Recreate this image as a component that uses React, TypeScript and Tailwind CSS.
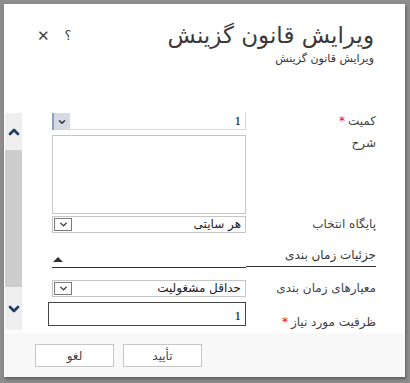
import { ChevronUp, ChevronDown } from 'lucide-react'

function SelectBox({ value }: { value: string }) {
  return (
    <div className="flex h-[17px] w-[194px] items-stretch border border-[#c6c6c6] bg-white">
      <div className="m-[1px] flex w-[18px] items-center justify-center border border-[#7a7a7a] bg-white">
        <ChevronDown size={11} strokeWidth={3} className="text-[#333]" />
      </div>
      <div dir="rtl" className="flex-1 pr-[4px] text-[12px] leading-[15px] text-[#222]">
        {value}
      </div>
    </div>
  )
}

function FormRow({ label, required, children, className, labelClass }: { label: string; required?: boolean; children: React.ReactNode; className?: string; labelClass?: string }) {
  return (
    <div dir="rtl" className={`flex items-start ${className ?? ''}`}>
      <div className={`w-[130px] shrink-0 text-[12px] leading-[16px] text-[#444] ${labelClass ?? ''}`}>
        {label}
        {required && <span className="mr-[3px] text-[#e00]">*</span>}
      </div>
      <div dir="ltr" className="flex w-[194px] justify-start">
        {children}
      </div>
    </div>
  )
}

export default function App() {
  return (
    <div className="h-[383px] w-[410px] overflow-hidden bg-[#8d8d8d] pl-[4px] pt-[4px] font-['DejaVu_Sans',sans-serif]">
      <div className="flex h-[373px] w-[401px] flex-col bg-white shadow-[1px_2px_3px_rgba(0,0,0,0.35)]">
        {/* header */}
        <div className="flex h-[109px] shrink-0 items-start pr-[31px] pt-[16px]">
          <div className="flex items-center gap-[15px] pl-[33px] pt-[7px] text-[#444]">
            <span className="text-[15px] leading-[18px]">✕</span>
            <span className="text-[13px] leading-[18px]">؟</span>
          </div>
          <div dir="rtl" className="ml-auto flex flex-col items-start">
            <div className="text-[23px] leading-[30px] text-[#3a3a3a]">ویرایش قانون گزینش</div>
            <div className="mt-[2px] text-[11px] leading-[14px] text-[#333]">ویرایش قانون گزینش</div>
          </div>
        </div>

        {/* body */}
        <div className="flex h-[217px] shrink-0 overflow-hidden">
          <div className="ml-[1px] flex w-[17px] shrink-0 flex-col">
            <div className="flex h-[37px] items-center justify-center bg-[#efefef]">
              <ChevronUp size={16} strokeWidth={4} className="text-[#1f3d63]" />
            </div>
            <div className="h-[137px] bg-[#cdcdcd]" />
            <div className="flex h-[43px] items-center justify-center bg-[#efefef]">
              <ChevronDown size={16} strokeWidth={4} className="text-[#1f3d63]" />
            </div>
          </div>
          <div className="flex flex-1 flex-col pl-[30px] pr-[30px]">
            <FormRow label="کمیت" required className="h-[24px]">
              <div className="flex h-[17px] w-[194px] items-stretch">
                <div className="flex w-[18px] items-center justify-center border-l-2 border-[#8fa0c0] bg-[#d5d9e3]">
                  <ChevronDown size={10} strokeWidth={3.5} className="text-[#333]" />
                </div>
                <div className="flex flex-1 items-center justify-end border-b border-r border-[#d8d8d8] pr-[4px] font-['Liberation_Serif',serif] text-[13px]">
                  1
                </div>
              </div>
            </FormRow>
            <FormRow label="شرح" className="h-[84px] pt-[3px]">
              <div className="h-[79px] w-[194px] border border-[#c6c6c6] bg-white" />
            </FormRow>
            <FormRow label="پایگاه انتخاب" className="h-[26px] pt-[2px]">
              <SelectBox value="هر سایتی" />
            </FormRow>
            <div dir="rtl" className="mt-[12px] flex h-[20px] items-start">
              <div className="h-[20px] w-[130px] shrink-0 border-b border-[#333] text-[12px] leading-[16px] text-[#333]">
                جزئیات زمان بندی
              </div>
              <div className="flex h-[21px] w-[194px] items-end justify-end border-b border-[#333] pb-[5px] pl-[1px]">
                <div className="h-0 w-0 border-x-[5px] border-b-[5px] border-x-transparent border-b-[#333]" />
              </div>
            </div>
            <FormRow label="معیارهای زمان بندی" className="mt-[12px] h-[27px] pt-[1px]">
              <SelectBox value="حداقل مشغولیت" />
            </FormRow>
            <FormRow label="ظرفیت مورد نیاز" required className="h-[30px] pt-[1px]" labelClass="pt-[12px]">
              <div className="ml-[-4px] flex h-[24px] w-[198px] items-start justify-end border border-[#444] pr-[4px] pt-[3px] font-['Liberation_Serif',serif] text-[13px]">
                1
              </div>
            </FormRow>
          </div>
        </div>

        {/* footer */}
        <div className="mt-[3px] flex flex-1 items-start gap-[9px] bg-[#f8f8f8] pl-[31px] pt-[11px]">
          <button className="h-[23px] w-[79px] border border-[#c6c6c6] bg-white text-[12px] text-[#444]">لغو</button>
          <button className="h-[23px] w-[79px] border border-[#c6c6c6] bg-white text-[12px] text-[#444]">تأیید</button>
        </div>
      </div>
    </div>
  )
}
